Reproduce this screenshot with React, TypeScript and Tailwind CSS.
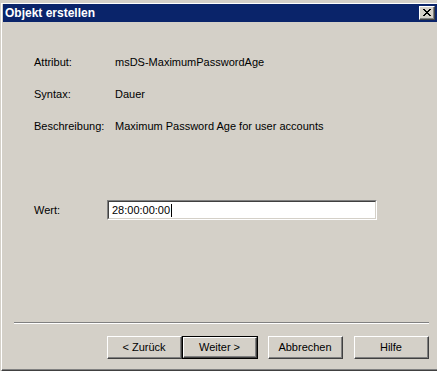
const font = { fontFamily: '"Liberation Sans", Arial, sans-serif' }

function Raised({ children, className = '' }: { children?: React.ReactNode; className?: string }) {
  return (
    <div className={`border border-t-white border-l-white border-r-[#404040] border-b-[#404040] bg-[#d4d0c8] ${className}`}>
      <div className="flex h-full w-full items-center justify-center border-r border-b border-r-[#808080] border-b-[#808080]">
        {children}
      </div>
    </div>
  )
}

function WizardButton({ label, isDefault = false, className = '' }: { label: string; isDefault?: boolean; className?: string }) {
  if (isDefault) {
    return (
      <div className={`h-[23px] w-[76px] border border-black ${className}`}>
        <Raised className="h-full w-full">
          <span className="text-[11px] leading-[13px] text-black">{label}</span>
        </Raised>
      </div>
    )
  }
  return (
    <Raised className={`h-[23px] w-[75px] ${className}`}>
      <span className="text-[11px] leading-[13px] text-black">{label}</span>
    </Raised>
  )
}

const rows = [
  { label: 'Attribut:', value: 'msDS-MaximumPasswordAge' },
  { label: 'Syntax:', value: 'Dauer' },
  { label: 'Beschreibung:', value: 'Maximum Password Age for user accounts' },
]

export default function App() {
  return (
    <div className="h-[371px] w-[437px] overflow-hidden bg-[#d4d0c8] pt-[3px] pl-[1px]" style={font}>
      <div className="h-[368px] border-t border-l border-b border-t-white border-l-white border-b-[#404040]">
        <div className="flex h-full flex-col border-b border-b-[#808080] pl-[1px]">
          {/* title bar */}
          <div className="flex h-[18px] items-center justify-between bg-[#0a246a] pl-[2px] pr-[2px]">
            <span className="text-[12px] font-bold leading-[14px] text-white">Objekt erstellen</span>
            <Raised className="h-[14px] w-[16px]">
              <svg width="8" height="7" viewBox="0 0 8 7" shapeRendering="crispEdges">
                <path d="M0 0h2v1h-2zM6 0h2v1h-2zM1 1h2v1h-2zM5 1h2v1h-2zM2 2h4v1h-4zM3 3h2v1h-2zM2 4h4v1h-4zM1 5h2v1h-2zM5 5h2v1h-2zM0 6h2v1h-2zM6 6h2v1h-2z" fill="#000" />
              </svg>
            </Raised>
          </div>

          {/* info rows */}
          <div className="mt-[34px] flex flex-col gap-[19px] pl-[31px]">
            {rows.map((r) => (
              <div key={r.label} className="flex text-[11px] leading-[13px] text-black">
                <span className="w-[81px]">{r.label}</span>
                <span>{r.value}</span>
              </div>
            ))}
          </div>

          {/* value input */}
          <div className="mt-[67px] flex items-center pl-[31px] text-[11px] leading-[13px] text-black">
            <span className="w-[73px]">Wert:</span>
            <div className="h-[20px] w-[270px] border border-t-[#808080] border-l-[#808080] border-r-white border-b-white">
              <div className="flex h-full items-center border border-t-[#404040] border-l-[#404040] border-r-[#d4d0c8] border-b-[#d4d0c8] bg-white pl-[3px]">
                <span>28:00:00:00</span>
                <span className="ml-[1px] h-[13px] w-[1px] bg-black" />
              </div>
            </div>
          </div>

          {/* separator */}
          <div className="mt-[102px] ml-[11px] w-[415px] border-t border-b border-t-[#808080] border-b-white" />

          {/* buttons */}
          <div className="mt-[12px] ml-[104px] flex">
            <WizardButton label="< Zurück" />
            <WizardButton label="Weiter >" isDefault />
            <WizardButton label="Abbrechen" className="ml-[10px]" />
            <WizardButton label="Hilfe" className="ml-[11px]" />
          </div>
        </div>
      </div>
    </div>
  )
}
